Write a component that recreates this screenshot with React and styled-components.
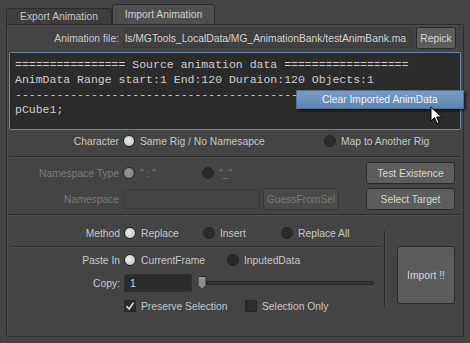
import React from 'react';
import styled, { createGlobalStyle } from 'styled-components';

const Global = createGlobalStyle`
  html, body {
    margin: 0;
    background: #444444;
  }
  * { box-sizing: border-box; }
`;

const Window = styled.div`
  width: 470px;
  height: 343px;
  padding: 4px 6px 6px 6px;
  background: #444444;
  font-family: "Liberation Sans", Arial, sans-serif;
  font-size: 10.3px;
  color: #c8c8c8;
  display: flex;
  flex-direction: column;
  overflow: hidden;
`;

const TabBar = styled.div`
  display: flex;
  align-items: flex-end;
  height: 20px;
`;

const Tab = styled.div`
  width: ${p => p.$w}px;
  height: ${p => (p.$active ? 20 : 16)}px;
  display: flex;
  align-items: center;
  justify-content: center;
  background: ${p => (p.$active ? '#4f4f4f' : '#3e3e3e')};
  border: 1px solid #2c2c2c;
  border-bottom: none;
  border-radius: 3px 3px 0 0;
  color: ${p => (p.$active ? '#d0d0d0' : '#c4c4c4')};
`;

const Pane = styled.div`
  flex: 1;
  border: 1px solid #2c2c2c;
  box-shadow: inset 1px 1px 0 #4c4c4c;
  border-radius: 0 2px 2px 2px;
  padding: 2px 1px 0 1px;
  display: flex;
  flex-direction: column;
`;

const Row = styled.div`
  display: flex;
  align-items: center;
  height: ${p => p.$h || 18}px;
  margin-top: ${p => p.$mt || 0}px;
  padding-right: ${p => p.$pr || 0}px;
`;

const Label = styled.div`
  width: ${p => p.$w}px;
  flex: none;
  text-align: right;
  margin-right: 4px;
  white-space: nowrap;
  color: ${p => (p.$off ? '#7b7b7b' : '#c8c8c8')};
`;

const LineEdit = styled.div`
  height: ${p => p.$h || 20}px;
  width: ${p => (p.$w ? `${p.$w}px` : 'auto')};
  flex: ${p => (p.$w ? 'none' : '1')};
  display: flex;
  align-items: center;
  padding-left: ${p => p.$pl || 2}px;
  background: ${p => p.$bg || '#404040'};
  border: 1px solid ${p => p.$bd || '#3a3a3a'};
  border-radius: 2px;
  color: #d4d4d4;
  white-space: nowrap;
  overflow: hidden;
`;

const Button = styled.div`
  width: ${p => p.$w}px;
  height: ${p => p.$h || 22}px;
  flex: none;
  display: flex;
  align-items: center;
  justify-content: center;
  margin-left: ${p => p.$ml || 0}px;
  background: ${p => (p.$off ? '#4a4a4a' : '#5d5d5d')};
  border: 1px solid ${p => (p.$off ? '#363636' : '#2a2a2a')};
  border-radius: 3px;
  color: ${p => (p.$off ? '#7a7a7a' : '#d6d6d6')};
  white-space: nowrap;
`;

const Console = styled.div`
  position: relative;
  margin: 3px 1px 0 1px;
  height: 78px;
  background: #2b2b2b;
  border: 1px solid #6884a2;
  border-radius: 2px;
  padding: 4px 0 0 5px;
  font-family: "Liberation Mono", "Courier New", monospace;
  font-size: 11.5px;
  line-height: 15px;
  color: #cfcfcf;
  white-space: pre;
`;

const Menu = styled.div`
  position: absolute;
  left: 286px;
  top: 37px;
  width: 168px;
  height: 19px;
  padding-left: 25px;
  display: flex;
  align-items: center;
  background: linear-gradient(#779bc4, #5e84b0);
  border: 1px solid #4f6f94;
  box-shadow: 2px 2px 2px rgba(0, 0, 0, 0.55);
  font-family: "Liberation Sans", Arial, sans-serif;
  font-size: 10.3px;
  color: #f2f2f2;
`;

const Cursor = styled.svg`
  position: absolute;
  left: 420px;
  top: 53px;
`;

const Options = styled.div`
  display: flex;
  align-items: center;
  flex: 1;
`;

const Option = styled.div`
  display: flex;
  align-items: center;
  gap: 5px;
  width: ${p => (p.$w ? `${p.$w}px` : 'auto')};
  flex: none;
  white-space: nowrap;
  color: ${p => (p.$off ? '#7b7b7b' : '#c8c8c8')};
`;

const Dot = styled.span`
  width: 12px;
  height: 12px;
  border-radius: 50%;
  flex: none;
  border: 1px solid #262626;
  background: ${p =>
    p.$on
      ? p.$off
        ? 'radial-gradient(circle at 40% 40%, #9a9a9a, #7a7a7a)'
        : 'radial-gradient(circle at 40% 40%, #ececec, #bdbdbd)'
      : '#2b2b2b'};
`;

const Separator = styled.div`
  height: 2px;
  margin: ${p => p.$m || '0 1px'};
  border-top: 1px solid #2e2e2e;
  border-bottom: 1px solid #4e4e4e;
`;

const Middle = styled.div`
  display: flex;
  padding: 4px 7px 4px 0;
`;

const Stack = styled.div`
  display: flex;
  flex-direction: column;
  gap: 4px;
  flex: ${p => (p.$grow ? 1 : 'none')};
`;

const Bottom = styled.div`
  display: flex;
  flex: 1;
`;

const LeftCol = styled.div`
  width: 372px;
  display: flex;
  flex-direction: column;
  padding-top: 8px;
`;

const VLine = styled.div`
  width: 2px;
  height: 77px;
  margin: 14px 0 0 4px;
  border-left: 1px solid #2e2e2e;
  border-right: 1px solid #4e4e4e;
`;

const ImportButton = styled(Button)`
  margin: 30px 0 0 11px;
  background: #5c5c5c;
`;

const Slider = styled.div`
  flex: 1;
  display: flex;
  align-items: center;
  margin: 0 6px 0 5px;
`;

const Track = styled.div`
  flex: 1;
  height: 4px;
  margin-left: -1px;
  background: #333;
  border: 1px solid #262626;
  border-radius: 2px;
`;

const Check = styled.span`
  width: 12px;
  height: 12px;
  flex: none;
  display: flex;
  align-items: center;
  justify-content: center;
  background: #2c2c2c;
  border: 1px solid #252525;
  border-radius: 1px;
`;

const CheckRow = styled.div`
  display: flex;
  align-items: center;
  height: 16px;
  margin-top: 6px;
  padding-left: 116px;
`;

const dashes = '-'.repeat(57);

export default function App() {
  return (
    <Window>
      <Global />
      <TabBar>
        <Tab $w={106}>Export Animation</Tab>
        <Tab $w={103} $active>Import Animation</Tab>
      </TabBar>
      <Pane>
        <Row $h={22} $pr={6}>
          <Label $w={111}>Animation file:</Label>
          <LineEdit $pl={1}>ls/MGTools_LocalData/MG_AnimationBank/testAnimBank.ma</LineEdit>
          <Button $w={40} $ml={3}>Repick</Button>
        </Row>

        <Console>
          {'================ Source animation data ==================\n'}
          {'AnimData Range start:1 End:120 Duraion:120 Objects:1\n'}
          {dashes + '\n'}
          {'pCube1;'}
          <Menu>Clear Imported AnimData</Menu>
          <Cursor width="13" height="20" viewBox="0 0 13 20">
            <path d="M1 1 L1 15 L4.5 11.5 L7 17.5 L9 16.6 L6.6 11 L11.5 11 Z" fill="#fff" stroke="#000" strokeWidth="1" strokeLinejoin="round" />
          </Cursor>
        </Console>

        <Row $mt={2}>
          <Label $w={111}>Character</Label>
          <Options>
            <Option $w={201}><Dot $on />Same Rig / No Namesapce</Option>
            <Option><Dot />Map to Another Rig</Option>
          </Options>
        </Row>

        <Separator style={{ marginTop: 6 }} />

        <Middle>
          <Stack $grow>
            <Row $h={22}>
              <Label $w={111} $off>Namespace Type</Label>
              <Options>
                <Option $w={79} $off><Dot $on $off />" : "</Option>
                <Option $off><Dot $off />"_"</Option>
              </Options>
            </Row>
            <Row $h={22}>
              <Label $w={111} $off>Namespace</Label>
              <LineEdit $w={137} $bg="#444" $bd="#3a3a3a" />
              <Button $w={76} $ml={3} $off>GuessFromSel</Button>
            </Row>
          </Stack>
          <Stack>
            <Button $w={89}>Test Existence</Button>
            <Button $w={89}>Select Target</Button>
          </Stack>
        </Middle>

        <Separator />

        <Bottom>
          <LeftCol>
            <Row>
              <Label $w={112}>Method</Label>
              <Options>
                <Option $w={79}><Dot $on />Replace</Option>
                <Option $w={78}><Dot />Insert</Option>
                <Option><Dot />Replace All</Option>
              </Options>
            </Row>
            <Separator $m="4px 0 0 3px" />
            <Row $mt={3}>
              <Label $w={112}>Paste In</Label>
              <Options>
                <Option $w={103}><Dot $on />CurrentFrame</Option>
                <Option><Dot />InputedData</Option>
              </Options>
            </Row>
            <Row $mt={5}>
              <Label $w={112}>Copy:</Label>
              <LineEdit $w={68} $h={18} $bg="#2b2b2b" $bd="#303030" $pl={5}>1</LineEdit>
              <Slider>
                <svg width="10" height="14" viewBox="0 0 10 14">
                  <path d="M1 1.5 Q1 0.5 2 0.5 L8 0.5 Q9 0.5 9 1.5 L9 9.5 L5 13.5 L1 9.5 Z" fill="#8a8a8a" stroke="#2a2a2a" strokeWidth="1" />
                  <path d="M2 2 L8 2" stroke="#a8a8a8" strokeWidth="1" />
                </svg>
                <Track />
              </Slider>
            </Row>
            <CheckRow>
              <Option $w={121}>
                <Check>
                  <svg width="10" height="10" viewBox="0 0 10 10">
                    <path d="M1.5 5.2 L4 8 L8.6 1.6" fill="none" stroke="#e0e0e0" strokeWidth="1.6" />
                  </svg>
                </Check>
                Preserve Selection
              </Option>
              <Option>
                <Check />
                Selection Only
              </Option>
            </CheckRow>
          </LeftCol>
          <VLine />
          <ImportButton $w={58} $h={58}>Import !!</ImportButton>
        </Bottom>
      </Pane>
    </Window>
  );
}
